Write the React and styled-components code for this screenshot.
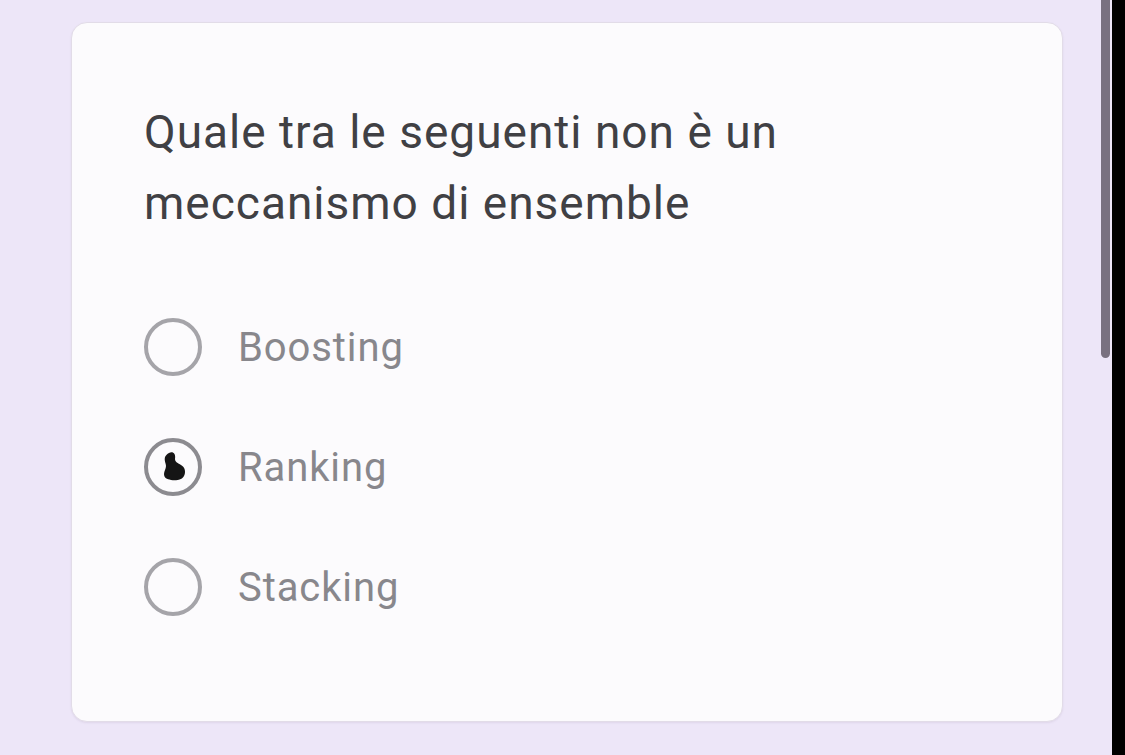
import React from "react";
import styled, { createGlobalStyle } from "styled-components";

const Global = createGlobalStyle`
  html, body { margin: 0; padding: 0; }
  body { background: #ede6f8; font-family: Roboto, "Noto Sans", sans-serif; }
`;

const Screen = styled.div`
  display: flex;
  width: 1125px;
  height: 755px;
  overflow: hidden;
`;

const Viewport = styled.div`
  position: relative;
  flex: 1;
  background: #ede6f8;
  padding: 22px 0 0 71px;
  box-sizing: border-box;
`;

const Edge = styled.div`
  width: 13px;
  background: #000;
`;

const ScrollThumb = styled.div`
  position: absolute;
  top: -6px;
  right: 2px;
  width: 9px;
  height: 364px;
  border-radius: 5px;
  background: #797180;
`;

const Card = styled.div`
  width: 992px;
  height: 700px;
  box-sizing: border-box;
  background: #fcfbfd;
  border: 1px solid #e2dce8;
  border-radius: 16px;
  box-shadow: 0 1px 2px rgba(120, 100, 140, 0.12);
  padding: 74px 72px 0 72px;
`;

const Question = styled.h2`
  margin: 0;
  font-family: Roboto, "Noto Sans", sans-serif;
  font-weight: 400;
  font-size: 46px;
  line-height: 71px;
  color: #404044;
  letter-spacing: 1px;
`;

const Options = styled.div`
  display: flex;
  flex-direction: column;
  gap: 62px;
  margin-top: 79px;
`;

const Option = styled.label`
  display: flex;
  align-items: center;
  gap: 36px;
  height: 58px;
`;

const Radio = styled.span`
  position: relative;
  width: 58px;
  height: 58px;
  box-sizing: border-box;
  border-radius: 50%;
  border: 4px solid ${(p) => (p.$checked ? "#8c8b90" : "#a5a4a9")};
  flex-shrink: 0;
`;

const Blob = styled.svg`
  position: absolute;
  left: 14px;
  top: 9px;
`;

const Label = styled.span`
  font-family: Roboto, "Noto Sans", sans-serif;
  font-size: 40px;
  color: #88878c;
  letter-spacing: 0.9px;
`;

const options = [
  { text: "Boosting", checked: false },
  { text: "Ranking", checked: true },
  { text: "Stacking", checked: false },
];

export default function App() {
  return (
    <>
      <Global />
      <Screen>
        <Viewport>
          <Card>
            <Question>
              Quale tra le seguenti non è un
              <br />
              meccanismo di ensemble
            </Question>
            <Options>
              {options.map((o) => (
                <Option key={o.text}>
                  <Radio $checked={o.checked}>
                    {o.checked && (
                      <Blob width="26" height="32" viewBox="0 0 26 32">
                        <path
                          d="M7 2 C11 0 14 3 13 8 C13 11 16 12 19 14 C23 16 24 21 22 25 C20 29 14 30 9 29 C5 28 2 27 2 23 C2 20 4 18 4 15 C4 12 2 10 3 6 C4 4 5 3 7 2 Z"
                          fill="#151515"
                        />
                      </Blob>
                    )}
                  </Radio>
                  <Label>{o.text}</Label>
                </Option>
              ))}
            </Options>
          </Card>
          <ScrollThumb />
        </Viewport>
        <Edge />
      </Screen>
    </>
  );
}
